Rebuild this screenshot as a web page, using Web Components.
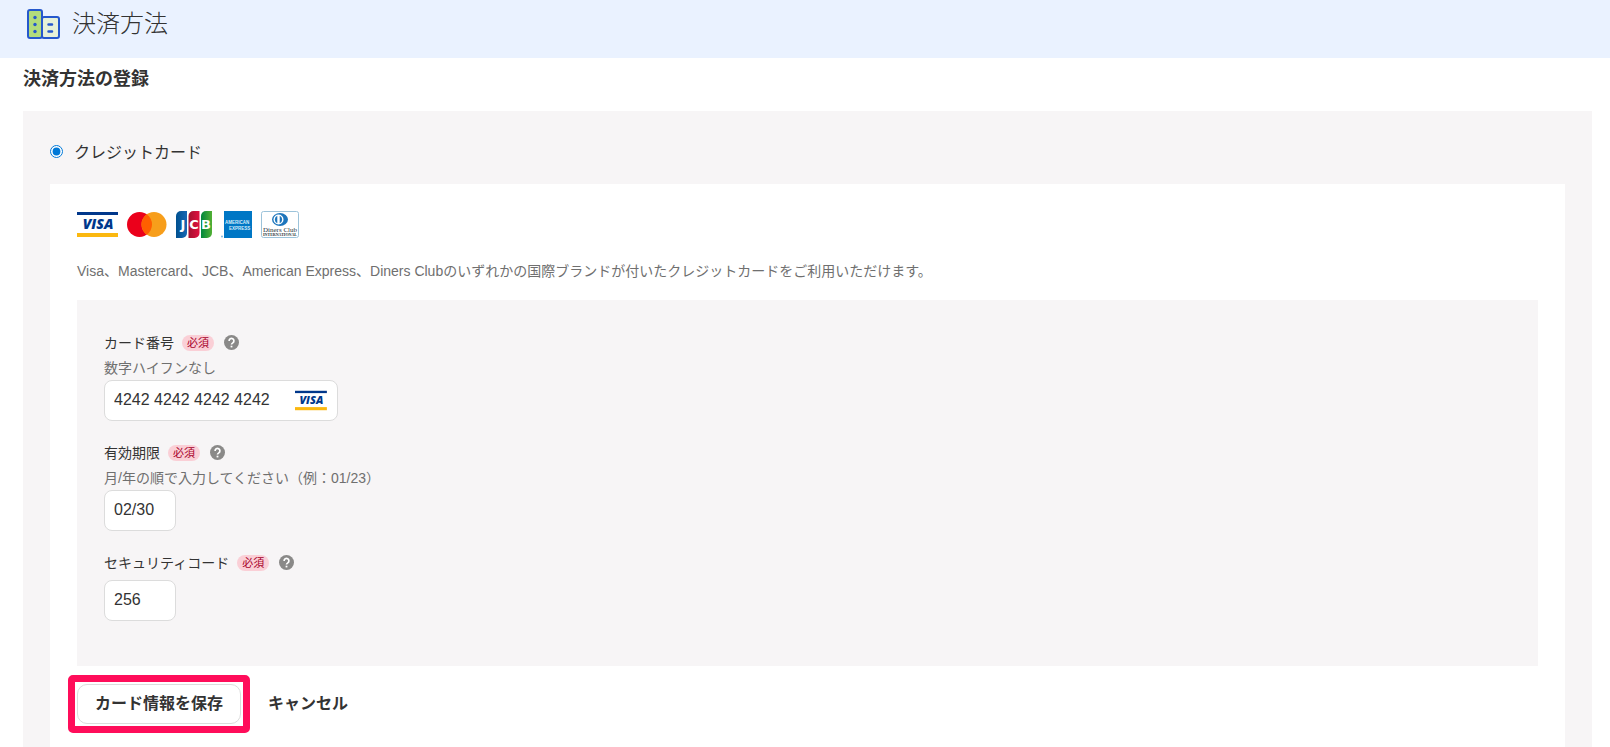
<!DOCTYPE html>
<html lang="ja">
<head>
<meta charset="utf-8">
<meta name="viewport" content="width=device-width, initial-scale=1">
<title>決済方法</title>
<style>
  :root {
    --text: #333;
    --muted: #6f6f6f;
    --panel: #f7f5f6;
    --border: #dcdcdc;
  }
  body {
    margin: 0;
    min-height: 100vh;
    display: flex;
    flex-direction: column;
    background: #fff;
    color: var(--text);
    font-family: "Liberation Sans", "Noto Sans CJK JP", sans-serif;
    font-size: 14px;
  }
  main {
    flex: 1;
    display: flex;
    flex-direction: column;
    padding: 0 18px 0 23px;
  }
  h2 {
    margin: 0;
    padding: 8px 0 18px;
    font-size: 18px;
    line-height: 27px;
  }
</style>
</head>
<body>
<page-header>決済方法</page-header>
<main>
  <h2>決済方法の登録</h2>
  <payment-option label="クレジットカード">
    <brand-list></brand-list>
    <card-form></card-form>
    <form-actions></form-actions>
  </payment-option>
</main>

<script>
class PageHeader extends HTMLElement {
  constructor() {
    super();
    this.attachShadow({ mode: 'open' });
    this.shadowRoot.innerHTML = `
      <style>
        :host { display: block; background: #eaf2ff; }
        header { display: flex; align-items: center; gap: 11px; height: 48px; padding: 0 27px 10px; }
        svg { display: block; }
        h1 { margin: 0; font-size: 24px; font-weight: 300; line-height: 36px; }
      </style>
      <header>
        <svg width="34" height="31" viewBox="0 0 34 31" aria-hidden="true">
          <g stroke="#2558cc" stroke-width="2">
            <rect x="15" y="8" width="17" height="21" rx="2" fill="#e6f1d8"/>
            <rect x="1" y="1" width="14" height="28" rx="2" fill="#b2dc7c"/>
            <path d="M21.500 15.500h3.500M21.500 22.500h3.500" stroke-width="2.500" stroke-linecap="round"/>
          </g>
          <g fill="#2558cc">
            <circle cx="8" cy="8.500" r="1.700"/>
            <circle cx="8" cy="15.500" r="1.700"/>
            <circle cx="8" cy="22.500" r="1.700"/>
          </g>
        </svg>
        <h1><slot></slot></h1>
      </header>
    `;
  }
}

class CardLogo extends HTMLElement {
  connectedCallback() {
    if (!this.shadowRoot) this.attachShadow({ mode: 'open' });
    this.shadowRoot.innerHTML = `
      <style>
        :host { display: block; }
        svg { display: block; height: var(--logo-height, 27px); width: auto; font-family: "Liberation Sans", sans-serif; }
      </style>
      ${this.logos()[this.getAttribute('brand')] || ''}
    `;
  }

  logos() {
    return {
      visa: `
        <svg viewBox="0 0 41 27" role="img" aria-label="Visa">
          <rect width="41" height="27" fill="#fff"/>
          <rect y="1" width="41" height="3" fill="#00378b"/>
          <rect y="22" width="41" height="4" fill="#fbb80f"/>
          <text x="21" y="18" text-anchor="middle" font-family="Open Sans" font-size="14" font-weight="800" font-style="italic" fill="#00378b">VISA</text>
        </svg>`,
      mastercard: `
        <svg viewBox="0 0 40 27" role="img" aria-label="Mastercard">
          <circle cx="12.500" cy="13.500" r="12.500" fill="#eb001b"/>
          <circle cx="27" cy="13.500" r="12.500" fill="#f79e1b"/>
          <path d="M19.750 3.300a12.500 12.500 0 0 1 0 20.400a12.500 12.500 0 0 1 0-20.400z" fill="#ff5f00"/>
        </svg>`,
      jcb: `
        <svg viewBox="0 0 36 27" role="img" aria-label="JCB">
          <defs>
            <linearGradient id="b"><stop stop-color="#00508f"/><stop offset="1" stop-color="#1668b4"/></linearGradient>
            <linearGradient id="r"><stop stop-color="#a3122f"/><stop offset="1" stop-color="#e0103f"/></linearGradient>
            <linearGradient id="g"><stop stop-color="#00873c"/><stop offset="1" stop-color="#52b034"/></linearGradient>
          </defs>
          <path d="M5 0h6v22a5 5 0 0 1-5 5H0V5a5 5 0 0 1 5-5z" fill="url(#b)"/>
          <path d="M17.500 0h6v22a5 5 0 0 1-5 5h-6V5a5 5 0 0 1 5-5z" fill="url(#r)"/>
          <path d="M30 0h6v22a5 5 0 0 1-5 5h-6V5a5 5 0 0 1 5-5z" fill="url(#g)"/>
          <g font-family="DejaVu Sans" font-size="13" font-weight="700" fill="#fff" text-anchor="middle">
            <text x="7" y="18">J</text>
            <text x="18" y="18">C</text>
            <text x="30" y="18">B</text>
          </g>
        </svg>`,
      amex: `
        <svg viewBox="0 0 31 27" role="img" aria-label="American Express">
          <rect x="3" width="28" height="27" fill="#0077c5"/>
          <circle cx="1" cy="25.500" r="1" fill="#7db7e0"/>
          <g font-size="4.500" font-weight="700" fill="#d8ecfa">
            <text x="4" y="13">AMERICAN</text>
            <text x="8" y="19">EXPRESS</text>
          </g>
        </svg>`,
      diners: `
        <svg viewBox="0 0 38 27" role="img" aria-label="Diners Club International">
          <rect x=".5" y=".5" width="37" height="26" rx="2" fill="#fff" stroke="#9cc3da"/>
          <ellipse cx="19" cy="8.500" rx="8" ry="6.500" fill="#1c75bc"/>
          <circle cx="17.500" cy="8.500" r="5" fill="#fff"/>
          <path d="M16.300 4.800a4 4 0 0 0 0 7.400zM18.700 4.800a4 4 0 0 1 0 7.400z" fill="#1c75bc"/>
          <g font-family="Liberation Serif" fill="#263238" text-anchor="middle">
            <text x="19" y="20.500" font-size="7">Diners Club</text>
            <text x="19" y="25" font-size="4" font-weight="700">INTERNATIONAL</text>
          </g>
        </svg>`
    };
  }
}

class BrandList extends HTMLElement {
  constructor() {
    super();
    this.attachShadow({ mode: 'open' });
    this.shadowRoot.innerHTML = `
      <style>
        :host { display: block; }
        .logos { display: flex; gap: 9px; }
        p { margin: 21px 0 0; color: var(--muted); line-height: 24px; }
      </style>
      <div class="logos">
        <card-logo brand="visa"></card-logo>
        <card-logo brand="mastercard"></card-logo>
        <card-logo brand="jcb"></card-logo>
        <card-logo brand="amex"></card-logo>
        <card-logo brand="diners"></card-logo>
      </div>
      <p>Visa、Mastercard、JCB、American Express、Diners Clubのいずれかの国際ブランドが付いたクレジットカードをご利用いただけます。</p>
    `;
  }
}

class PaymentOption extends HTMLElement {
  constructor() {
    super();
    this.attachShadow({ mode: 'open' });
  }

  connectedCallback() {
    this.shadowRoot.innerHTML = `
      <style>
        :host { flex: 1; display: flex; flex-direction: column; padding: 30px 27px 0; background: var(--panel); }
        label { display: flex; align-items: center; align-self: flex-start; gap: 11px; font-size: 16px; line-height: 24px; margin-bottom: 19px; }
        input { width: 13px; height: 13px; margin: 0 0 4px; accent-color: #0078d7; }
        .body { flex: 1; padding: 27px 27px 15px; background: #fff; }
      </style>
      <label><input type="radio" name="method" checked>${this.getAttribute('label')}</label>
      <div class="body"><slot></slot></div>
    `;
  }
}

class TextField extends HTMLElement {
  constructor() {
    super();
    this.attachShadow({ mode: 'open' });
  }

  connectedCallback() {
    const hint = this.getAttribute('hint');
    this.shadowRoot.innerHTML = `
      <style>
        :host { display: block; }
        .head { display: flex; align-items: center; line-height: 24px; }
        .badge { margin-left: 8px; padding: 0 5px; border-radius: 8px; background: #facfd6; color: #a8002a; font-size: 11px; line-height: 16px; }
        .help { margin: 0 0 2px 10px; padding: 0; border: 0; background: none; }
        .help svg { display: block; }
        .hint { margin: 1px 0 0; color: var(--muted); line-height: 24px; }
        .box { display: flex; align-items: center; box-sizing: border-box; width: 72px; height: 41px; padding: 0 9px; border: 1px solid var(--border); border-radius: 8px; background: #fff; }
        :host(:not([hint])) .box { margin-top: 5px; }
        :host([wide]) .box { width: 234px; padding-right: 10px; }
        input { flex: 1; min-width: 0; padding: 0 0 2px; border: 0; outline: 0; background: none; color: inherit; font: inherit; font-size: 16px; }
      </style>
      <div class="head">
        <label for="field">${this.getAttribute('label')}</label>
        <span class="badge">必須</span>
        <button class="help" type="button" aria-label="ヘルプ">
          <svg width="15" height="15" viewBox="0 0 15 15">
            <circle cx="7.500" cy="7.500" r="7.500" fill="#8a8988"/>
            <path d="M5.100 5.900a2.400 2.400 0 1 1 3.700 2c-.9.600-1.300.9-1.300 1.700" fill="none" stroke="#fff" stroke-width="1.700"/>
            <rect x="6.600" y="10.700" width="1.800" height="1.700" fill="#fff"/>
          </svg>
        </button>
      </div>
      ${hint ? `<p class="hint">${hint}</p>` : ''}
      <div class="box">
        <input id="field" type="text" inputmode="numeric" value="${this.getAttribute('value')}">
        <slot></slot>
      </div>
    `;
  }
}

class CardForm extends HTMLElement {
  constructor() {
    super();
    this.attachShadow({ mode: 'open' });
    this.shadowRoot.innerHTML = `
      <style>
        :host { display: block; margin-top: 17px; background: var(--panel); }
        form { display: flex; flex-direction: column; gap: 20px; padding: 31px 27px 45px; }
        card-logo { --logo-height: 21px; }
      </style>
      <form>
        <text-field wide label="カード番号" hint="数字ハイフンなし" value="4242 4242 4242 4242">
          <card-logo brand="visa"></card-logo>
        </text-field>
        <text-field label="有効期限" hint="月/年の順で入力してください（例：01/23）" value="02/30"></text-field>
        <text-field label="セキュリティコード" value="256"></text-field>
      </form>
    `;
  }
}

class FormActions extends HTMLElement {
  constructor() {
    super();
    this.attachShadow({ mode: 'open' });
    this.shadowRoot.innerHTML = `
      <style>
        :host { display: flex; align-items: center; gap: 18px; margin: 9px 0 0 -9px; }
        button { padding: 0; border: 0; background: #fff; color: inherit; font: inherit; font-size: 16px; font-weight: 700; line-height: 24px; }
        .save { padding: 7px 17px; border: 1px solid var(--border); border-radius: 10px; }
        .focus { display: flex; padding: 2px; border: 7px solid #ff0d5a; border-radius: 5px; }
      </style>
      <div class="focus"><button class="save" type="button">カード情報を保存</button></div>
      <button type="button">キャンセル</button>
    `;
  }
}

customElements.define('page-header', PageHeader);
customElements.define('card-logo', CardLogo);
customElements.define('brand-list', BrandList);
customElements.define('payment-option', PaymentOption);
customElements.define('text-field', TextField);
customElements.define('card-form', CardForm);
customElements.define('form-actions', FormActions);
</script>
</body>
</html>
